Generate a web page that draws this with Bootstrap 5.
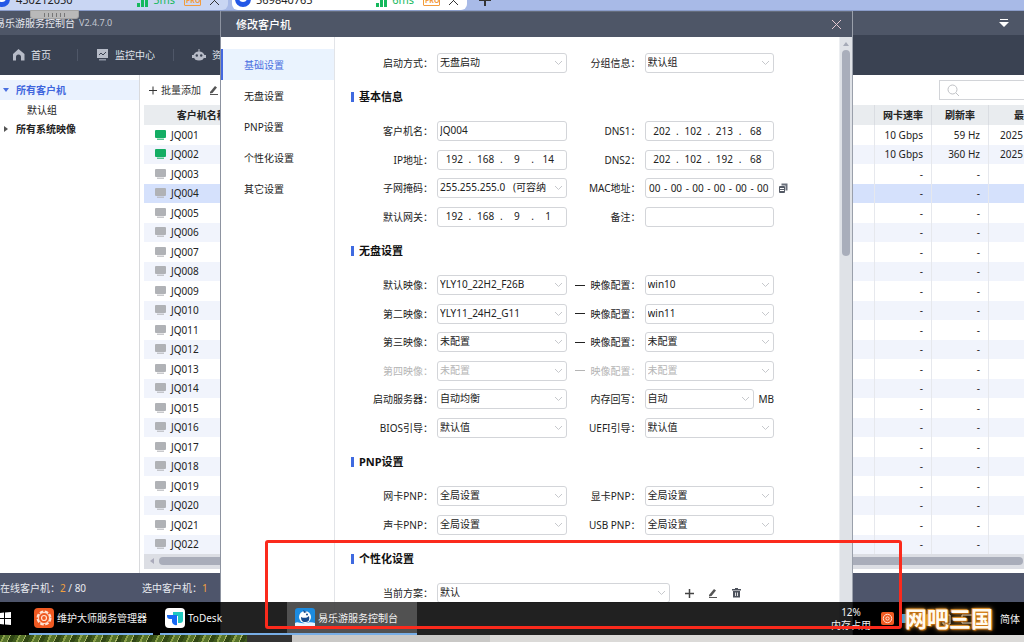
<!DOCTYPE html>
<html lang="zh-CN">
<head>
<meta charset="utf-8">
<meta name="viewport" content="width=device-width, initial-scale=1">
<title>易乐游服务控制台</title>
<link href="https://cdn.jsdelivr.net/npm/bootstrap@5.3.0/dist/css/bootstrap.min.css" rel="stylesheet">
<style>
body{font-family:"Noto Sans","Noto Sans CJK SC",sans-serif;font-size:10px;line-height:14px;color:#222;background:#000;height:100vh;overflow:hidden}
svg{display:block;flex:none}
a{color:inherit;text-decoration:none}
/* remote-session tabs */
.tabstrip{height:11px;background:#a8bae7;border-bottom:1px solid #8b9dca}
.rtab{height:20px;background:#c9d6f3;border-radius:0 0 6px 0;padding-left:16px;width:228px;font-size:11px}
.rtab.on{background:#fff;width:235px;padding-left:24px;margin-left:4px;border-radius:0 0 6px 6px}
.rlogo{left:-6px;bottom:3px;width:16px;height:16px;border-radius:50%;background:#2458e6}
.rtab.on .rlogo{left:3px}
.rlogo::after{content:"";position:absolute;left:4px;top:3px;width:8px;height:8px;border-radius:50%;background:#fff}
.ms{color:#15b85c;margin-right:9px}
.pro{border:1px solid #f39b3c;color:#f39b3c;font-size:7px;line-height:9px;padding:0 1px;width:17px;height:11px;border-radius:1px;text-align:center;font-weight:700}
.xbtn{border:0;background:none;padding:0;line-height:1;color:#333}
/* console window */
.appbar{height:24px;background:#4e5667;color:#e6e8ee;padding-right:15px}
.appname{margin-left:-5px}
.ver{font-size:9px;color:#c3c7d0}
.grip{left:30px;top:10px;width:49px;height:9px;background:#b9b9b9;border:1px solid #a2a2a2;border-radius:0 0 3px 3px;z-index:2;gap:3px}
.grip i{width:1px;height:4px;background:#777}
.mainnav{height:40px;background:#3a4252;color:#dfe2e9;padding-left:12px;gap:18px}
.mainnav a{gap:6px;line-height:16px}
.mainnav a:first-child{padding-right:8px}
.vsep{width:1px;height:12px;background:#4f5768}
.side{width:140px;background:#fff;border-right:1px solid #d9dadd;padding-top:5px}
.side a{height:20px;gap:6px;padding-left:3px}
.side a.sub{height:19px;padding-left:27px}
.side .on{background:#eaf2fe;color:#3f66dd}
.tools{height:30px;padding-left:5px}
.search{width:110px;height:20px;border:1px solid #d2d4d8;margin-right:-25px;padding-left:7px}
.search input{border:0;background:none;width:80px;padding:0;outline:0}
.clients{width:calc(100% + 76px);table-layout:fixed;margin:0;font-size:10px;line-height:14px;color:#222}
.clients th,.clients td{padding:0 0 1px;border:0;border-right:1px solid #e6e8ed;white-space:nowrap;background:transparent;vertical-align:middle;overflow:hidden}
.clients thead tr{height:20px;background:#e9ecef}
.clients th{text-align:center;border-color:#dadde2;font-weight:700}
.clients th:first-child{padding-left:6px}
.clients tbody tr{height:20px;background:#fff}
.clients tbody tr:nth-child(even){height:19px;background:#f1f4fc}
.clients tbody tr.sel{background:#d5e1fc}
.clients td.num{text-align:right;padding-right:8px}
.clients td.seen{padding-left:11px}
.cname{padding-left:11px}
.hbar{height:15px;background:#dcdee4;margin-bottom:4px;padding:3px 1px 4px 6px;gap:4px}
.hbar b{background:#a9adba;border-radius:4px}
.status{height:29px;background:#4e556b;color:#e8eaf0}
.status em{color:#f2a03d;font-style:normal}
/* dialog */
.dlg{left:221px;right:171px;top:11px;bottom:7px;z-index:1;background:#fff;border-left:1px solid #8d93a0;border-right:1px solid #9aa0ab;margin-left:-1px}
.dlgbar{height:26px;background:#4e5667;color:#fff;border-top:1px solid #656d7d;font-size:11px;padding-left:15px;padding-right:11px;font-weight:500}
.dnav{width:114px;border-right:1px solid #e2e4e8;padding-top:12px}
.dnav a{height:31px;padding-left:21px;border-left:2px solid transparent}
.dnav a.on{background:#eaf3fe;color:#4a70e0;border-color:#4468e0}
.pane{padding-top:12px}
.sec{height:40px;font-size:11px;font-weight:700;margin:0;padding-left:16px;gap:5px;color:#111}
.sec::before{content:"";width:3px;height:10px;background:#3f6ae0}
.frm{display:grid;grid-template-columns:102px 1fr 78px 1fr 65px;grid-auto-rows:28px 29px;align-items:center}
.frm label{text-align:right;padding-right:4px;white-space:nowrap}
.frm .dash{display:flex;justify-content:space-between;padding-left:8px}
.frm .dash::before{content:"";width:10px;height:1px;background:currentColor;align-self:center}
.off{color:#b5b5b5 !important;opacity:1 !important}
.ctl{height:20px;min-height:0;padding:0 2px 2px;font-size:10px;line-height:14px;border:1px solid #d3d5d9;border-radius:3px;color:#222;background-color:#fff;width:100%;min-width:0}
select.ctl{appearance:none;padding-bottom:2px;padding-right:16px;background:#fff url("data:image/svg+xml,%3Csvg xmlns='http://www.w3.org/2000/svg' width='9' height='6'%3E%3Cpath d='M1 1l3.5 3.5L8 1' fill='none' stroke='%23c6c8cc'/%3E%3C/svg%3E") no-repeat right 3px center}
.ctl.seg{display:flex;align-items:center;padding:0 1px 1px 0}
.seg input{border:0;padding:0;background:none;width:0;flex:1;text-align:center;font-size:10px;color:#222;outline:0}
.ip input{flex:0 1 33px}
.ip i{margin:0 -2px;font-style:normal}
.mac i{font-style:normal;width:3px}
.wide{grid-column:2/6}
.wide .ctl{width:233px}
.acts{gap:14px;padding-left:15px}
.vbar{width:13px;background:#dfe2e7;padding-top:5px;gap:4px;border-left:1px solid #eceef1}
.vbar b{width:8px;height:206px;border-radius:4px;background:#a9aebb}
/* taskbar and desktop */
.taskbar{height:33px;z-index:2;background:rgba(0,0,0,.87);color:#f2f2f2}
.titem{height:33px;border-bottom:2px solid #78aee6;padding-left:5px;gap:3px;color:#f2f2f2}
.titem.on{background:rgba(255,255,255,.22);padding-left:8px}
.w1{width:124px;margin-left:18px;flex:none}
.w2{width:127px;margin-left:7px;flex:none}
.w3{width:130px;flex:none}
.ticon{width:20px;height:20px}
.memuse{line-height:13px;padding-right:10px}
.tray{width:119px}
.wmark{font-family:"Noto Sans CJK SC",sans-serif;font-weight:700;font-size:22px;line-height:28px;color:#fffaf0;text-shadow:0 0 2px #e58a1c,1px 1px 1px #b5620c,-1px -1px 1px #f0a23a,0 0 5px #f4b14f;left:24px;top:-9px;white-space:nowrap}
.desk{height:7px;background:linear-gradient(90deg,transparent 247px,#333 247px 292px,#c9c8c6 292px 490px,#dbdad8 490px),repeating-linear-gradient(115deg,#3f5a1c 0 3px,#8aa04a 3px 5px,#56732a 5px 9px,#a3b265 9px 10px,#2f4614 10px 14px)}
.frame{left:265px;right:122px;top:540px;bottom:13px;border:3px solid #fb2a1c;border-radius:3px;z-index:5;pointer-events:none}
</style>
</head>
<body class="d-flex flex-column position-relative">

<div class="tabstrip d-flex align-items-end overflow-hidden flex-shrink-0">
  <div class="rtab d-flex align-items-center position-relative flex-shrink-0"><span class="rlogo position-absolute"></span><span>450212050</span>
    <svg class="ms-auto me-1" width="12" height="13" fill="#15b85c"><path d="M0 9h3v4H0zM4 5h3v8H4zM8 0h3v13H8z"/></svg><span class="ms">5ms</span><span class="pro">PRO</span>
    <button class="xbtn mx-2" aria-label="关闭标签"><svg width="11" height="11" stroke="#333" fill="none"><path d="M1 1l9 9M10 1L1 10"/></svg></button></div>
  <div class="rtab on d-flex align-items-center position-relative flex-shrink-0"><span class="rlogo position-absolute"></span><span>569840765</span>
    <svg class="ms-auto me-1" width="12" height="13" fill="#15b85c"><path d="M0 9h3v4H0zM4 5h3v8H4zM8 0h3v13H8z"/></svg><span class="ms">6ms</span><span class="pro">PRO</span>
    <button class="xbtn mx-2" aria-label="关闭标签"><svg width="11" height="11" stroke="#333" fill="none"><path d="M1 1l9 9M10 1L1 10"/></svg></button></div>
  <button class="xbtn ms-2 ps-1 pb-1" aria-label="新标签"><svg width="12" height="12" stroke="#333" stroke-width="2"><path d="M6 0v12M0 6h12"/></svg></button>
</div>
<div class="grip position-absolute d-flex align-items-center justify-content-center"><i></i><i></i><i></i><i></i><i></i><i></i></div>

<header class="appbar d-flex align-items-center flex-shrink-0">
  <span class="appname">易乐游服务控制台</span><span class="ver ms-1">V2.4.7.0</span>
  <svg class="ms-auto" width="10" height="8" fill="#fff"><path d="M1 0h8v1H1zM0 3h10L5 8z"/></svg>
</header>
<nav class="mainnav d-flex align-items-center flex-shrink-0">
  <a href="#" class="d-flex align-items-center"><svg width="13" height="12" fill="#b7bcc8"><path d="M6.500 0l6 5v6.500H9V8a2 2 0 0 0-5 0v3.500H1V5z"/></svg>首页</a>
  <span class="vsep"></span>
  <a href="#" class="d-flex align-items-center"><svg width="13" height="12"><path d="M1 0h11v9H1z" fill="#b7bcc8"/><path d="M3 10h7v1.500H3z" fill="#8d94a4"/><path d="M3 6l2-2 2 2 3-3" fill="none" stroke="#3a4252"/></svg>监控中心</a>
  <span class="vsep"></span>
  <a href="#" class="d-flex align-items-center"><svg width="14" height="12" fill="#b7bcc8"><path d="M6.500 0h1v3h-1z"/><ellipse cx="7" cy="7" rx="5.500" ry="4.500"/><path d="M0 6h2v3H0zM12 6h2v3h-2z"/><circle cx="4.800" cy="6.500" r="1.200" fill="#3a4252"/><circle cx="9.200" cy="6.500" r="1.200" fill="#3a4252"/></svg>资源中心</a>
</nav>

<main class="d-flex flex-grow-1 overflow-hidden bg-white">
  <nav class="side flex-shrink-0">
    <a href="#" class="on d-flex align-items-center fw-semibold"><svg width="7" height="5" fill="#4a70e0"><path d="M0 0h6L3 4z"/></svg><span>所有客户机</span></a>
    <a href="#" class="sub d-flex align-items-center">默认组</a>
    <a href="#" class="d-flex align-items-center fw-semibold"><svg width="7" height="7" fill="#555"><path d="M1 0v6l4-3z"/></svg><span>所有系统映像</span></a>
  </nav>
  <section class="flex-grow-1 d-flex flex-column overflow-hidden ms-1">
    <div class="tools d-flex align-items-center flex-shrink-0">
      <button class="xbtn d-flex align-items-center gap-1"><svg width="8" height="9" stroke="#333"><path d="M4 0.500v8M0 4.500h8"/></svg>批量添加</button>
      <svg class="ms-2" width="10" height="10"><path d="M1 7l5-6 2 1.500L3.500 8 1 8.500z" fill="#555"/><path d="M1 9.500h8" stroke="#555"/></svg>
      <label class="search ms-auto d-flex align-items-center gap-2"><svg width="13" height="13" fill="none" stroke="#c0c2c6"><circle cx="5.500" cy="5.500" r="4.500"/><path d="M9 9l3 3"/></svg><input aria-label="搜索"></label>
    </div>
    <table class="table clients flex-shrink-0">
      <colgroup><col style="width:110px"><col><col style="width:57px"><col style="width:57px"><col style="width:111px"></colgroup>
      <thead><tr><th>客户机名称</th><th></th><th>网卡速率</th><th>刷新率</th><th>最后上线时间</th></tr></thead>
      <tbody id="rows"></tbody>
    </table>
    <div class="hbar d-flex mt-auto flex-shrink-0"><svg width="5" height="8" fill="#aab"><path d="M4 1v6L0 4z"/></svg><b class="flex-grow-1"></b></div>
  </section>
</main>
<footer class="status d-flex align-items-center flex-shrink-0"><span>在线客户机：<em>2</em> / 80</span><span class="ms-5 ps-2">选中客户机：<em>1</em></span></footer>

<section class="dlg position-absolute d-flex flex-column overflow-hidden" role="dialog" aria-label="修改客户机">
  <div class="dlgbar d-flex align-items-center flex-shrink-0">修改客户机<button class="xbtn ms-auto" aria-label="关闭"><svg width="9" height="9" stroke="#e5c9d2" fill="none"><path d="M0 0l9 9M9 0L0 9"/></svg></button></div>
  <div class="d-flex flex-grow-1 overflow-hidden">
    <nav class="dnav flex-shrink-0">
      <a href="#" class="on d-flex align-items-center">基础设置</a><a href="#" class="d-flex align-items-center">无盘设置</a><a href="#" class="d-flex align-items-center">PNP设置</a><a href="#" class="d-flex align-items-center">个性化设置</a><a href="#" class="d-flex align-items-center">其它设置</a>
    </nav>
    <form class="pane flex-grow-1">
      <div class="frm">
        <label for="boot">启动方式：</label><select id="boot" class="ctl"><option>无盘启动</option></select>
        <label for="grp">分组信息：</label><select id="grp" class="ctl"><option>默认组</option></select><span></span>
      </div>
      <h2 class="sec d-flex align-items-center">基本信息</h2>
      <div class="frm">
        <label for="cname">客户机名：</label><input id="cname" class="ctl" value="JQ004">
        <label for="dns1">DNS1：</label><div class="ctl seg ip"><input id="dns1" value="202"><i>.</i><input aria-label="DNS1" value="102"><i>.</i><input aria-label="DNS1" value="213"><i>.</i><input aria-label="DNS1" value="68"></div><span></span>
        <label for="ip">IP地址：</label><div class="ctl seg ip"><input id="ip" value="192"><i>.</i><input aria-label="IP" value="168"><i>.</i><input aria-label="IP" value="9"><i>.</i><input aria-label="IP" value="14"></div>
        <label for="dns2">DNS2：</label><div class="ctl seg ip"><input id="dns2" value="202"><i>.</i><input aria-label="DNS2" value="102"><i>.</i><input aria-label="DNS2" value="192"><i>.</i><input aria-label="DNS2" value="68"></div><span></span>
        <label for="mask">子网掩码：</label><select id="mask" class="ctl"><option>255.255.255.0 &nbsp; (可容纳</option></select>
        <label for="mac">MAC地址：</label><div class="ctl seg mac"><input id="mac" value="00"><i>-</i><input aria-label="MAC" value="00"><i>-</i><input aria-label="MAC" value="00"><i>-</i><input aria-label="MAC" value="00"><i>-</i><input aria-label="MAC" value="00"><i>-</i><input aria-label="MAC" value="00"></div>
        <button type="button" class="xbtn ps-1" aria-label="复制"><svg width="11" height="11"><path d="M3.500 1.500h5v6" fill="none" stroke="#6b717c" stroke-width="2"/><rect x="1" y="3" width="6" height="7" rx="1" fill="#555b66"/><path d="M2 5.500h4M2 7.500h4" stroke="#fff"/></svg></button>
        <label for="gw">默认网关：</label><div class="ctl seg ip"><input id="gw" value="192"><i>.</i><input aria-label="网关" value="168"><i>.</i><input aria-label="网关" value="9"><i>.</i><input aria-label="网关" value="1"></div>
        <label for="memo">备注：</label><input id="memo" class="ctl"><span></span>
      </div>
      <h2 class="sec d-flex align-items-center">无盘设置</h2>
      <div class="frm">
        <label for="i1">默认映像：</label><select id="i1" class="ctl"><option>YLY10_22H2_F26B</option></select><label for="c1" class="dash">映像配置：</label><select id="c1" class="ctl"><option>win10</option></select><span></span>
        <label for="i2">第二映像：</label><select id="i2" class="ctl"><option>YLY11_24H2_G11</option></select><label for="c2" class="dash">映像配置：</label><select id="c2" class="ctl"><option>win11</option></select><span></span>
        <label for="i3">第三映像：</label><select id="i3" class="ctl"><option>未配置</option></select><label for="c3" class="dash">映像配置：</label><select id="c3" class="ctl"><option>未配置</option></select><span></span>
        <label for="i4" class="off">第四映像：</label><select id="i4" class="ctl off" disabled><option>未配置</option></select><label for="c4" class="dash off">映像配置：</label><select id="c4" class="ctl off" disabled><option>未配置</option></select><span></span>
        <label for="srv">启动服务器：</label><select id="srv" class="ctl"><option>自动均衡</option></select><label for="mem">内存回写：</label><div class="d-flex align-items-center gap-1"><select id="mem" class="ctl"><option>自动</option></select>MB</div><span></span>
        <label for="bios">BIOS引导：</label><select id="bios" class="ctl"><option>默认值</option></select><label for="uefi">UEFI引导：</label><select id="uefi" class="ctl"><option>默认值</option></select><span></span>
      </div>
      <h2 class="sec d-flex align-items-center">PNP设置</h2>
      <div class="frm">
        <label for="p1">网卡PNP：</label><select id="p1" class="ctl"><option>全局设置</option></select><label for="p2">显卡PNP：</label><select id="p2" class="ctl"><option>全局设置</option></select><span></span>
        <label for="p3">声卡PNP：</label><select id="p3" class="ctl"><option>全局设置</option></select><label for="p4">USB PNP：</label><select id="p4" class="ctl"><option>全局设置</option></select><span></span>
      </div>
      <h2 class="sec d-flex align-items-center">个性化设置</h2>
      <div class="frm">
        <label for="plan">当前方案：</label>
        <div class="wide d-flex align-items-center"><select id="plan" class="ctl"><option>默认</option></select>
          <div class="acts d-flex align-items-center">
            <button type="button" class="xbtn" aria-label="新增"><svg width="9" height="9" stroke="#444" stroke-width="1.500"><path d="M4.500 0v9M0 4.500h9"/></svg></button>
            <button type="button" class="xbtn" aria-label="编辑"><svg width="10" height="10"><path d="M1 7l5-6 2 1.500L3.500 8 1 8.500z" fill="#555"/><path d="M1 9.500h8" stroke="#555"/></svg></button>
            <button type="button" class="xbtn" aria-label="删除"><svg width="9" height="10"><path d="M3 0h3v1h3v1.500H0V1h3zM1 3h7v6.500H1z" fill="#4c515b"/><path d="M3.500 4.500v3.500M5.500 4.500v3.500" stroke="#fff" stroke-width=".8"/></svg></button>
          </div>
        </div>
      </div>
    </form>
    <div class="vbar d-flex flex-column align-items-center flex-shrink-0"><svg width="6" height="4" fill="#a6abb8"><path d="M3 0l3 4H0z"/></svg><b></b></div>
  </div>
</section>

<div class="taskbar d-flex align-items-center flex-shrink-0 position-relative">
  <svg width="11" height="13" fill="#fff"><path d="M0 1l4-.500v5.500H0zM5 .500l6-.500v6H5zM0 7h4v5.500L0 12zM5 7h6v6l-6-.500z"/></svg>
  <a href="#" class="titem w1 d-flex align-items-center"><svg class="ticon" viewBox="0 0 20 20"><rect width="20" height="20" rx="4" fill="#f05a22"/><circle cx="10" cy="10" r="6.500" fill="none" stroke="#ffe3d4" stroke-width="2" stroke-dasharray="3.600 1.500"/><circle cx="10" cy="10" r="5.500" fill="none" stroke="#ffe3d4"/><circle cx="10" cy="10" r="2.500" fill="none" stroke="#ffe3d4" stroke-width="1.200"/></svg>维护大师服务管理器</a>
  <a href="#" class="titem w2 d-flex align-items-center"><svg class="ticon" viewBox="0 0 20 20"><rect width="20" height="20" rx="4" fill="#fff"/><path d="M8 4h10v8a3 3 0 0 1-3 3h-2V8H8z" fill="#1fc8c0"/><path d="M2 7h10v10a4 4 0 0 1-5-3v-3H5a3 3 0 0 1-3-3z" fill="#1769f5"/></svg>ToDesk</a>
  <a href="#" class="titem on w3 d-flex align-items-center"><svg class="ticon" viewBox="0 0 20 20"><rect width="20" height="20" rx="3" fill="#1c8be0"/><circle cx="10" cy="9" r="6" fill="#fff"/><path d="M6 9c3 1.500 6 1 8-1 1 5-1 6-4 6s-4-2-4-5z" fill="#174a8c"/><path d="M8 2l4 2-3 1z" fill="#174a8c"/><circle cx="12" cy="6.500" r="1" fill="#174a8c"/><path d="M0 15c3-2 5 1 10 0s7-1 10 0v4H0z" fill="#e8f4ff"/></svg>易乐游服务控制台</a>
  <div class="memuse ms-auto text-center">12%<br>内存占用</div>
  <div class="tray d-flex align-items-center position-relative">
    <svg width="13" height="13" viewBox="0 0 20 20"><rect width="20" height="20" rx="3" fill="#f05a22"/><circle cx="10" cy="10" r="6.500" fill="none" stroke="#ffe3d4" stroke-width="1.500"/><circle cx="10" cy="10" r="2.500" fill="none" stroke="#ffe3d4" stroke-width="1.500"/></svg>
    <svg class="ms-2" width="72" height="14"><rect y="2" width="14" height="9" fill="#3f9ad8"/><circle cx="26" cy="8" r="6" fill="#e9d23a"/><path d="M41 3h7v9h-7zM60 3h11v8H60z" fill="none" stroke="#ddd"/></svg>
    <span class="wmark position-absolute">网吧三国</span>
  </div>
  <span class="pe-1">简体</span>
</div>
<div class="desk flex-shrink-0"></div>
<div class="frame position-absolute"></div>

<script>
const live = {1: ['10 Gbps', '59 Hz', '2025'], 2: ['10 Gbps', '360 Hz', '2025']};
let html = '';
for (let i = 1; i <= 22; i++) {
  const d = live[i] || ['-', '-', ''], c = live[i] ? '#13ad63' : '#b0b2b6';
  html += `<tr class="${i === 4 ? 'sel' : ''}"><td><span class="cname d-flex align-items-center gap-1"><svg width="12" height="10" fill="${c}"><rect width="11" height="8" rx="1"/><path d="M2 8.500h7v1.500H2z" opacity=".7"/></svg>JQ${String(i).padStart(3, '0')}</span></td><td></td><td class="num">${d[0]}</td><td class="num">${d[1]}</td><td class="seen">${d[2]}</td></tr>`;
}
document.getElementById('rows').innerHTML = html;
</script>
<script src="https://cdn.jsdelivr.net/npm/bootstrap@5.3.0/dist/js/bootstrap.bundle.min.js"></script>
</body>
</html>
